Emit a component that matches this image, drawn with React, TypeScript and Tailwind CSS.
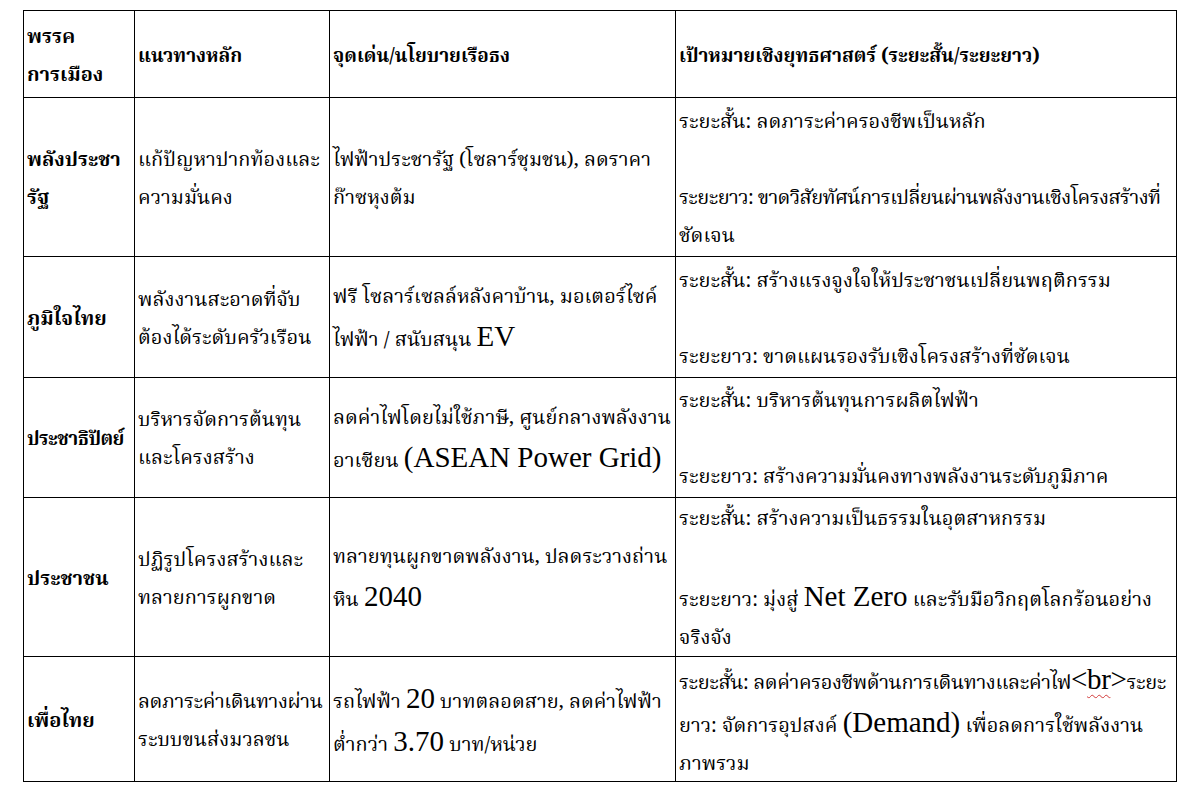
import React from 'react';

// Latin runs use Times-metric serif at a larger size, like the Word export
function En({ children }: { children: React.ReactNode }) {
    return <span className="font-['Liberation_Serif',serif] text-[29px]">{children}</span>;
}

function Cell({ children, bold, className = '' }: { children: React.ReactNode; bold?: boolean; className?: string }) {
    return (
        <div className="flex items-center border-r border-b border-black pl-[3px] pt-[5px]">
            <div className={`leading-[38px] whitespace-nowrap ${bold ? 'font-bold' : ''} ${className}`}>{children}</div>
        </div>
    );
}

const rows: { party: React.ReactNode; main: React.ReactNode; policy: React.ReactNode; goal: React.ReactNode }[] = [
    {
        party: <>พลังประชา<br />รัฐ</>,
        main: <>แก้ปัญหาปากท้องและ<br />ความมั่นคง</>,
        policy: <>ไฟฟ้าประชารัฐ (โซลาร์ชุมชน), ลดราคา<br />ก๊าซหุงต้ม</>,
        goal: (
            <>
                ระยะสั้น: ลดภาระค่าครองชีพเป็นหลัก<br /><br />
                <span className="tracking-[-0.6px]">ระยะยาว: ขาดวิสัยทัศน์การเปลี่ยนผ่านพลังงานเชิงโครงสร้างที่</span><br />ชัดเจน
            </>
        ),
    },
    {
        party: <>ภูมิใจไทย</>,
        main: <>พลังงานสะอาดที่จับ<br />ต้องได้ระดับครัวเรือน</>,
        policy: <>ฟรี โซลาร์เซลล์หลังคาบ้าน, มอเตอร์ไซค์<br />ไฟฟ้า / สนับสนุน <En>EV</En></>,
        goal: <>ระยะสั้น: สร้างแรงจูงใจให้ประชาชนเปลี่ยนพฤติกรรม<br /><br />ระยะยาว: ขาดแผนรองรับเชิงโครงสร้างที่ชัดเจน</>,
    },
    {
        party: <span className="text-[19px] tracking-[-0.5px]">ประชาธิปัตย์</span>,
        main: <>บริหารจัดการต้นทุน<br />และโครงสร้าง</>,
        policy: <>ลดค่าไฟโดยไม่ใช้ภาษี, ศูนย์กลางพลังงาน<br />อาเซียน <En>(ASEAN Power Grid)</En></>,
        goal: <>ระยะสั้น: บริหารต้นทุนการผลิตไฟฟ้า<br /><br />ระยะยาว: สร้างความมั่นคงทางพลังงานระดับภูมิภาค</>,
    },
    {
        party: <>ประชาชน</>,
        main: <>ปฏิรูปโครงสร้างและ<br />ทลายการผูกขาด</>,
        policy: <>ทลายทุนผูกขาดพลังงาน, ปลดระวางถ่าน<br />หิน <En>2040</En></>,
        goal: <>ระยะสั้น: สร้างความเป็นธรรมในอุตสาหกรรม<br /><br />ระยะยาว: มุ่งสู่ <En>Net Zero</En> และรับมือวิกฤตโลกร้อนอย่าง<br />จริงจัง</>,
    },
    {
        party: <>เพื่อไทย</>,
        main: <><span className="tracking-[-0.4px]">ลดภาระค่าเดินทางผ่าน</span><br />ระบบขนส่งมวลชน</>,
        policy: <>รถไฟฟ้า <En>20</En> บาทตลอดสาย, ลดค่าไฟฟ้า<br />ต่ำกว่า <En>3.70</En> บาท/หน่วย</>,
        goal: (
            <>
                <span className="tracking-[-0.4px]">
                    ระยะสั้น: ลดค่าครองชีพด้านการเดินทางและค่าไฟ
                    <En>&lt;<span className="underline decoration-wavy decoration-[#d23b3b] decoration-1 underline-offset-[5px]">br</span>&gt;</En>ระยะ
                </span>
                <br />ยาว: จัดการอุปสงค์ <En>(Demand)</En> เพื่อลดการใช้พลังงาน<br />ภาพรวม
            </>
        ),
    },
];

export default function App() {
    return (
        <div className="w-[1200px] h-[793px] bg-white pt-[10px] pl-[23px] text-black font-['Noto_Serif_Thai','Noto_Sans_Thai','Tlwg_Typo','Garuda','Loma','Liberation_Serif',serif] text-[20px]">
            <div className="grid grid-cols-[111px_195px_346px_501px] grid-rows-[87px_159px_121px_120px_159px_125px] w-fit border-l border-t border-black">
                {/* Header */}
                <Cell bold className="text-[20px]">พรรค<br />การเมือง</Cell>
                <Cell bold className="text-[19px]">แนวทางหลัก</Cell>
                <Cell bold className="text-[19px]">จุดเด่น/นโยบายเรือธง</Cell>
                <Cell bold className="text-[19px]">เป้าหมายเชิงยุทธศาสตร์ (ระยะสั้น/ระยะยาว)</Cell>

                {rows.map((r, i) => (
                    <React.Fragment key={i}>
                        <Cell bold>{r.party}</Cell>
                        <Cell>{r.main}</Cell>
                        <Cell>{r.policy}</Cell>
                        <Cell>{r.goal}</Cell>
                    </React.Fragment>
                ))}
            </div>
        </div>
    );
}
